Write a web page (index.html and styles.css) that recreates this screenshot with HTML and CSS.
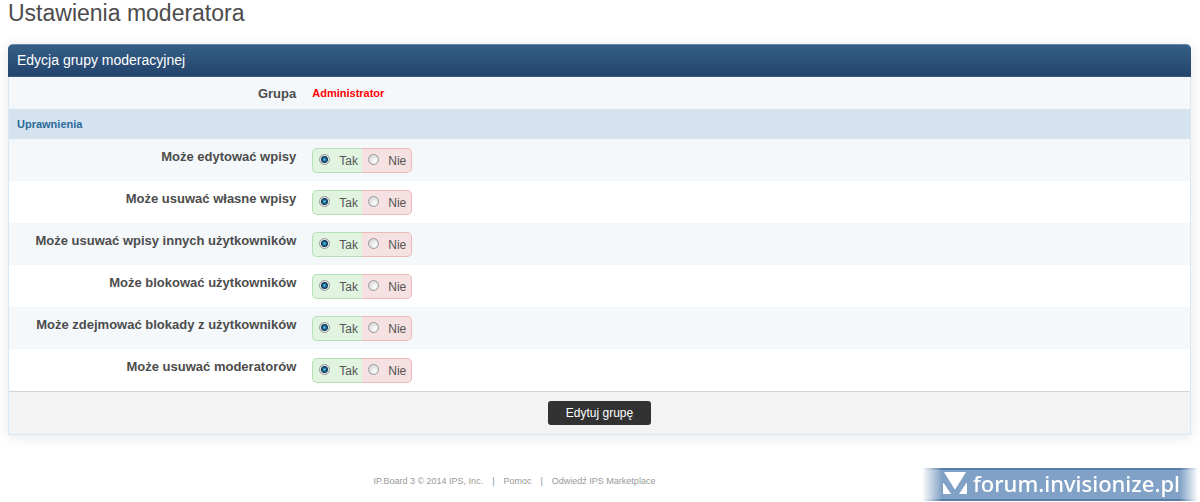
FILE: index.html
```
<!DOCTYPE html>
<html lang="pl">
<head>
  <meta charset="UTF-8">
  <meta name="viewport" content="width=device-width, initial-scale=1.0">
  <title>Ustawienia moderatora</title>
  <link rel="stylesheet" href="styles.css">
</head>
<body>
  <h1>Ustawienia moderatora</h1>

  <form class="box">
    <h2>Edycja grupy moderacyjnej</h2>

    <table class="settings">
      <tbody>
        <tr class="group">
          <th scope="row">Grupa</th>
          <td><strong class="admin">Administrator</strong></td>
        </tr>
        <tr class="section">
          <th colspan="2">Uprawnienia</th>
        </tr>
        <tr class="option">
          <th scope="row" id="edit">Może edytować wpisy</th>
          <td>
            <div class="yesno" role="radiogroup" aria-labelledby="edit">
              <label class="yes"><input type="radio" name="edit" value="1" checked>Tak</label>
              <label class="no"><input type="radio" name="edit" value="0">Nie</label>
            </div>
          </td>
        </tr>
        <tr class="option">
          <th scope="row" id="delete-own">Może usuwać własne wpisy</th>
          <td>
            <div class="yesno" role="radiogroup" aria-labelledby="delete-own">
              <label class="yes"><input type="radio" name="delete-own" value="1" checked>Tak</label>
              <label class="no"><input type="radio" name="delete-own" value="0">Nie</label>
            </div>
          </td>
        </tr>
        <tr class="option">
          <th scope="row" id="delete-other">Może usuwać wpisy innych użytkowników</th>
          <td>
            <div class="yesno" role="radiogroup" aria-labelledby="delete-other">
              <label class="yes"><input type="radio" name="delete-other" value="1" checked>Tak</label>
              <label class="no"><input type="radio" name="delete-other" value="0">Nie</label>
            </div>
          </td>
        </tr>
        <tr class="option">
          <th scope="row" id="ban">Może blokować użytkowników</th>
          <td>
            <div class="yesno" role="radiogroup" aria-labelledby="ban">
              <label class="yes"><input type="radio" name="ban" value="1" checked>Tak</label>
              <label class="no"><input type="radio" name="ban" value="0">Nie</label>
            </div>
          </td>
        </tr>
        <tr class="option">
          <th scope="row" id="unban">Może zdejmować blokady z użytkowników</th>
          <td>
            <div class="yesno" role="radiogroup" aria-labelledby="unban">
              <label class="yes"><input type="radio" name="unban" value="1" checked>Tak</label>
              <label class="no"><input type="radio" name="unban" value="0">Nie</label>
            </div>
          </td>
        </tr>
        <tr class="option">
          <th scope="row" id="remove-mods">Może usuwać moderatorów</th>
          <td>
            <div class="yesno" role="radiogroup" aria-labelledby="remove-mods">
              <label class="yes"><input type="radio" name="remove-mods" value="1" checked>Tak</label>
              <label class="no"><input type="radio" name="remove-mods" value="0">Nie</label>
            </div>
          </td>
        </tr>
      </tbody>
    </table>

    <div class="actions">
      <button type="submit">Edytuj grupę</button>
    </div>
  </form>

  <footer class="footer">
    <span>IP.Board 3 © 2014 IPS, Inc.</span>
    <span class="sep">|</span>
    <a href="#">Pomoc</a>
    <span class="sep">|</span>
    <a href="#">Odwiedź IPS Marketplace</a>
  </footer>

  <!-- site badge, floats over the bottom right corner -->
  <div class="badge">
    <svg width="24" height="23" viewBox="0 0 24 23" fill="#fff">
      <path d="M1 0H23L12.500 17Q12 18 11.500 17Z"/>
      <path d="M0 11Q1 11 2 13L8 22H1Q0 22 0 21Z"/>
      <path d="M24 11Q23 11 22 13L16 22H23Q24 22 24 21Z"/>
    </svg>
    <span>forum.invisionize.pl</span>
  </div>
</body>
</html>
```
FILE: styles.css
```
body {
  margin: 0;
  padding: 0 9px 0 8px;
  background: #fff;
  color: #4c4c4c;
  font-family: "Liberation Sans", Arial, sans-serif;
  font-size: 12px;
}
h1 {
  margin: 0 0 17px;
  font-size: 23px;
  font-weight: normal;
  line-height: 27px;
}
.box {
  border: 1px solid #d9e8f3;
  border-top: 0;
  border-radius: 5px 5px 0 0;
  box-shadow: 0 2px 14px rgba(0, 0, 0, 0.1);
}
h2 {
  margin: 0 -1px;
  padding: 0 9px;
  border-top: 1px solid #5f8ba8;
  border-bottom: 1px solid #3a5474;
  border-radius: 5px 5px 0 0;
  background: linear-gradient(#345f86, #24446d);
  color: #fff;
  font-size: 14px;
  font-weight: normal;
  line-height: 31px;
}
.settings {
  width: 100%;
  border-collapse: collapse;
}
th, td {
  padding: 9px 8px 7px;
  text-align: left;
  vertical-align: top;
}
th {
  width: 25%;
  box-sizing: border-box;
  font-size: 13px;
  line-height: 16px;
  text-align: right;
}
.group {
  background: #f4f8fb;
}
.admin {
  color: #f00;
  font-size: 11px;
}
.section {
  background: #d5e3f0;
}
.section th {
  padding: 7px 8px;
  color: #2b6a98;
  font-size: 11px;
  text-align: left;
}
.option:nth-child(odd) {
  background: #f4f8fb;
}
.option th {
  padding-top: 10px;
}
.option td {
  padding: 9px 8px 8px;
}
.yesno {
  display: flex;
}
.yesno label {
  display: flex;
  align-items: center;
  box-sizing: border-box;
  height: 25px;
  width: 50px;
  padding-left: 6px;
  border: 1px solid #b5dfb5;
  color: #555;
}
.yesno .yes {
  border-right: 0;
  border-radius: 5px 0 0 5px;
  background: #e0f4e0;
}
.yesno .no {
  border-color: #ecb9b9;
  border-left: 0;
  border-radius: 0 5px 5px 0;
  background: #f5e1e1;
}
.yesno input {
  appearance: none;
  width: 11px;
  height: 11px;
  margin: 0 9px 2px 0;
  border: 1px solid #999;
  border-radius: 50%;
  background: radial-gradient(circle at 65% 65%, #fff, #ccc);
}
.yesno input:checked {
  background: radial-gradient(circle at 50% 50%, #69c5ea 0, #17608c 2px, #0d3450 3px, #e4e8ea 4px);
}
.actions {
  padding: 9px;
  border-top: 1px solid #d3d5d6;
  background: #f3f3f3;
  text-align: center;
}
button {
  padding: 0 18px;
  border: 0;
  border-radius: 3px;
  background: #323232;
  color: #fff;
  font-family: inherit;
  font-size: 12px;
  line-height: 24px;
  vertical-align: top;
  cursor: pointer;
}
.footer {
  display: flex;
  justify-content: center;
  gap: 9px;
  padding: 40px 170px 0 0;
  color: #999;
  font-size: 9px;
  line-height: 12px;
}
.footer a {
  color: inherit;
  text-decoration: none;
}
.sep {
  color: #7d93ab;
}
.badge {
  position: fixed;
  right: 2px;
  bottom: 1px;
  display: flex;
  align-items: center;
  gap: 6px;
  padding: 0 18px 2px 21px;
  border-top: 2px solid #557da8;
  border-bottom: 2px solid #557da8;
  background: #81a2c6;
  color: #fff;
  font-family: "Noto Sans", "Open Sans", sans-serif;
  font-size: 22px;
  font-weight: 500;
  line-height: 27px;
  -webkit-mask-image: linear-gradient(to right, transparent, #000 20px, #000 calc(100% - 18px), transparent);
  mask-image: linear-gradient(to right, transparent, #000 20px, #000 calc(100% - 18px), transparent);
}
```
